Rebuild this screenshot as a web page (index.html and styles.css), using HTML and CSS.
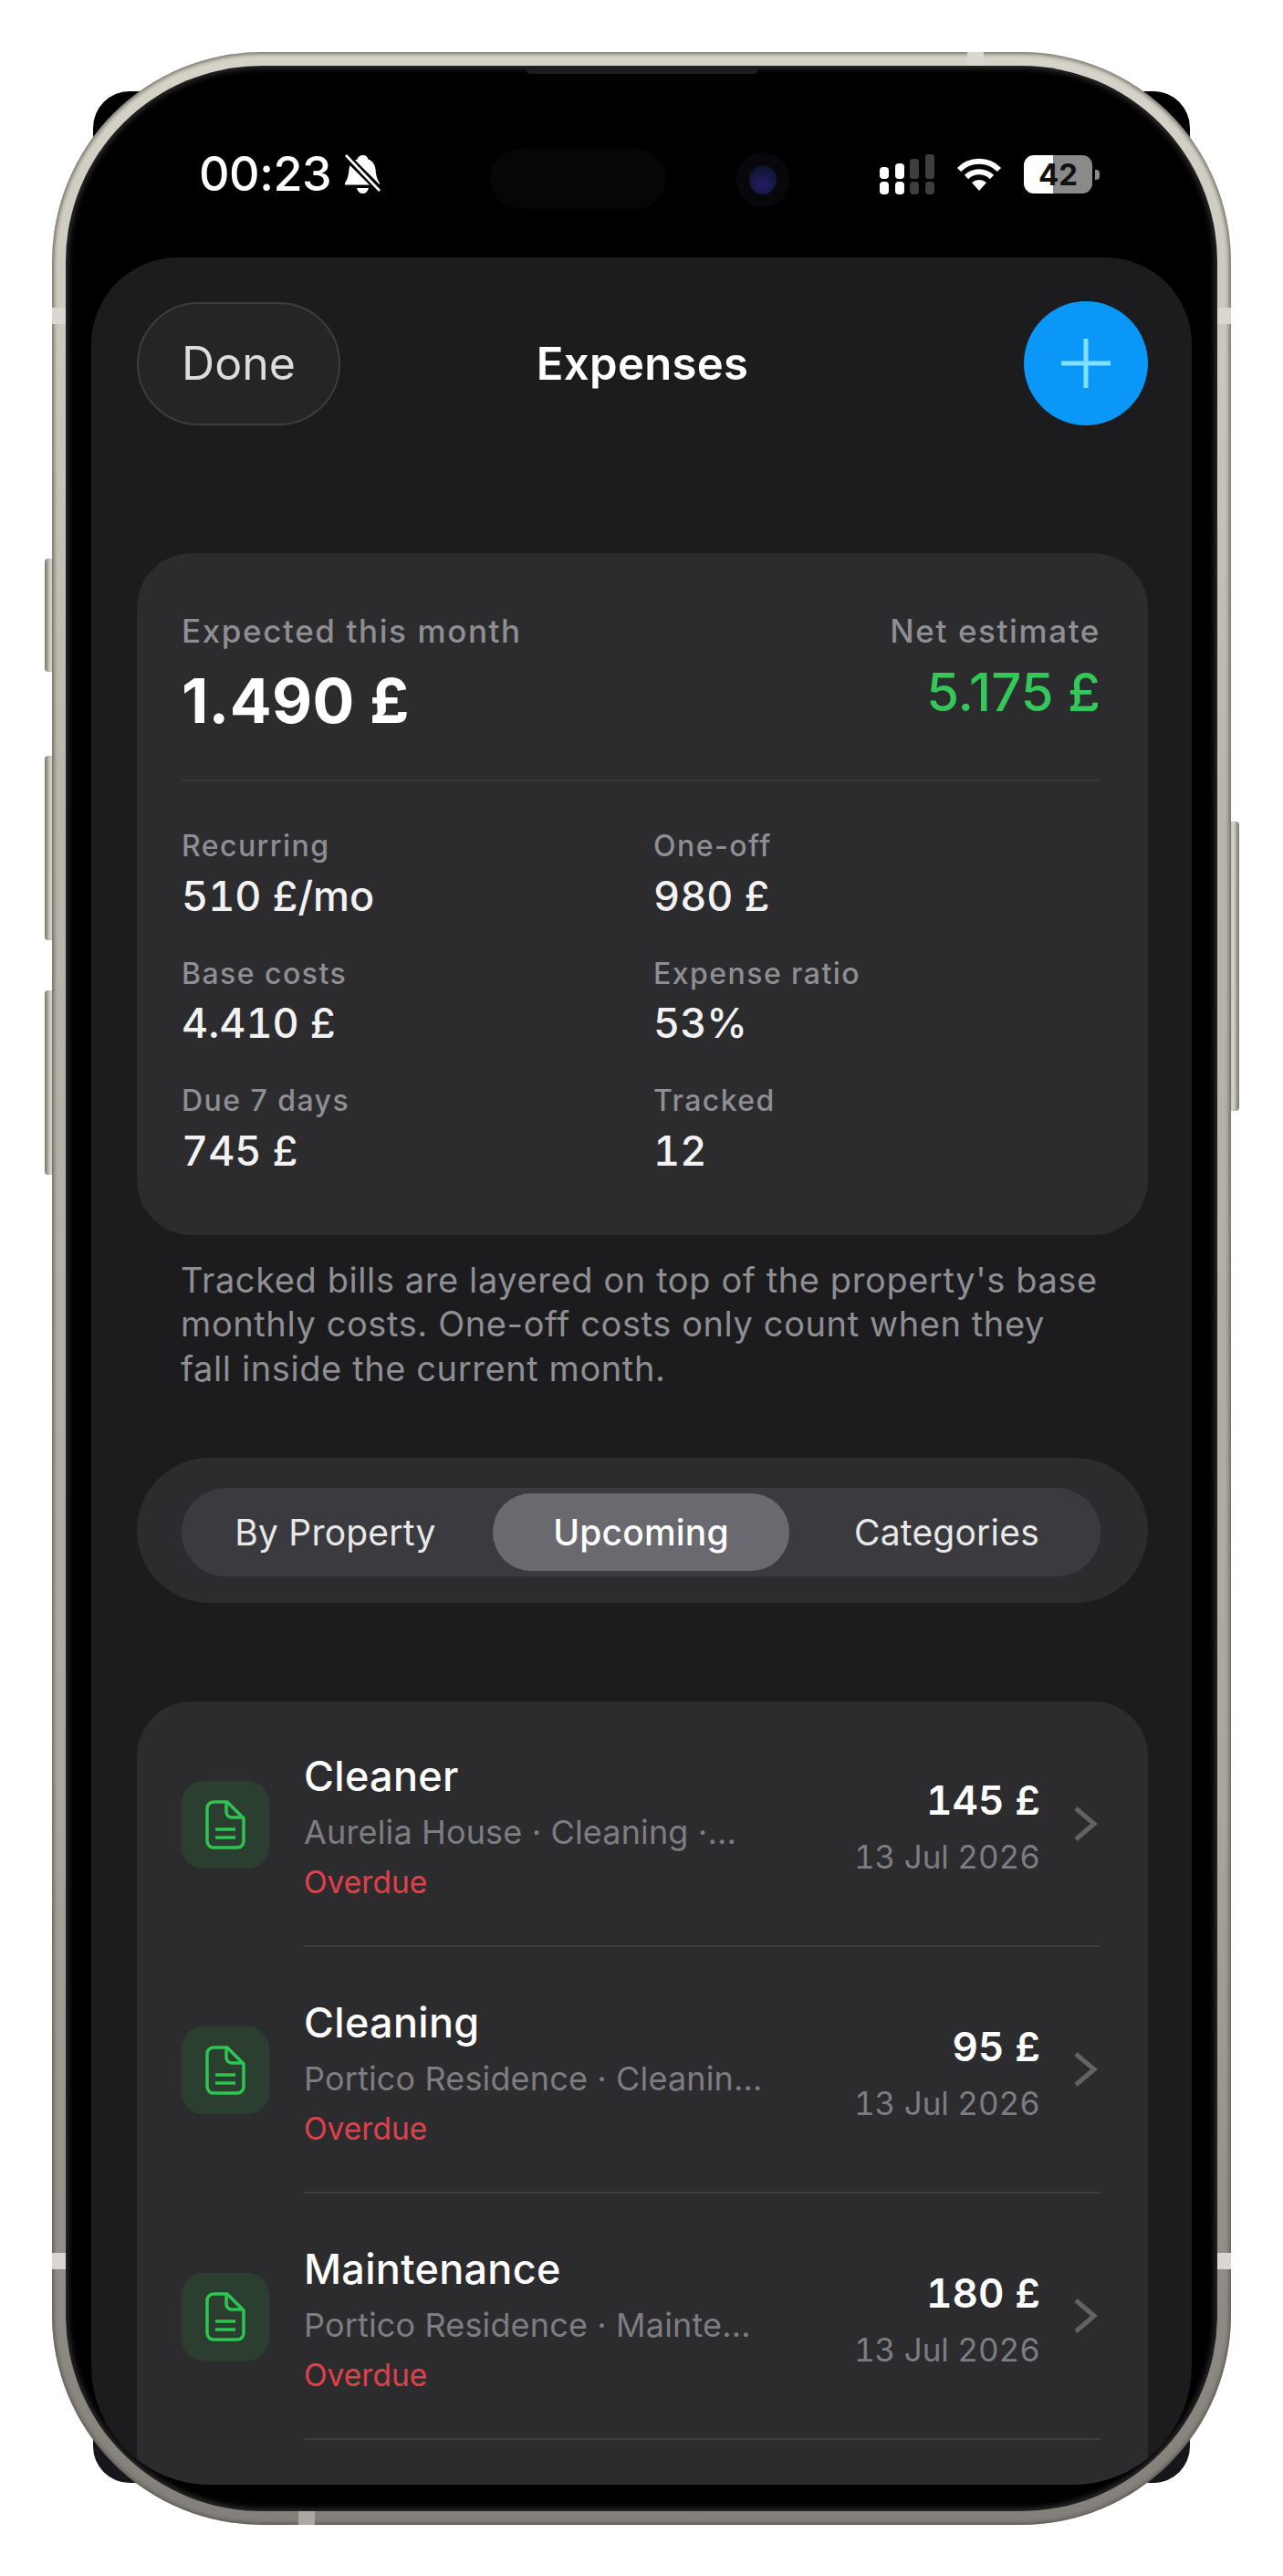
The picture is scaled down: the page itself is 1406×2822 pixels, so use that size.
FILE: index.html
```html
<!DOCTYPE html>
<html lang="en">
<head>
    <meta charset="UTF-8">
    <meta name="viewport" content="width=device-width, initial-scale=1.0">
    <title>Expenses</title>
    <link rel="stylesheet" href="styles.css">
</head>
<body>
    <div class="phone">
        <div class="phone-back"></div>
        <div class="side-btn btn-action"></div>
        <div class="side-btn btn-up"></div>
        <div class="side-btn btn-down"></div>
        <div class="side-btn btn-power"></div>

        <div class="frame">
            <div class="band band-left-top"></div>
            <div class="band band-right-top"></div>
            <div class="band band-left-bottom"></div>
            <div class="band band-right-bottom"></div>
            <div class="band band-top"></div>
            <div class="band band-bottom"></div>

            <div class="bezel">
                <div class="speaker"></div>

                <div class="status-bar">
                    <div class="status-left">
                        <span class="clock">00:23</span>
                        <svg class="bell" viewBox="0 0 40 44">
                            <path d="M21 1c3 0 5 2 5.500 4.500 5 2 7.500 6 8 11 .5 6 1.500 11 4.500 15v2H1v-2c3-4 4-9 4.500-15 .5-5 4-9 9-11C15 3 18 1 21 1z" fill="#fff"/>
                            <path d="M14 37h13c-1 4-3.500 6-6.500 6S15 41 14 37z" fill="#fff"/>
                            <path d="M0 0l40 40" stroke="#000" stroke-width="8"/>
                            <path d="M2 1l37 39" stroke="#fff" stroke-width="2.600"/>
                        </svg>
                    </div>
                    <div class="island"></div>
                    <div class="camera"><div class="lens"></div></div>
                    <div class="status-right">
                        <svg class="signal" viewBox="0 0 60 44">
                            <rect x="0" y="14" width="10" height="13" rx="4" fill="#fff"/>
                            <rect x="0" y="30" width="10" height="14" rx="4" fill="#fff"/>
                            <rect x="17" y="10" width="10" height="17" rx="4" fill="#fff"/>
                            <rect x="17" y="30" width="10" height="14" rx="4" fill="#fff"/>
                            <rect x="33" y="5" width="10" height="22" rx="3" fill="#3d3d3d"/>
                            <rect x="33" y="30" width="10" height="14" rx="4" fill="#3d3d3d"/>
                            <rect x="50" y="0" width="10" height="27" rx="3" fill="#3d3d3d"/>
                            <rect x="50" y="30" width="10" height="14" rx="4" fill="#3d3d3d"/>
                        </svg>
                        <svg class="wifi" viewBox="0 0 50 36">
                            <path d="M3 13A31 31 0 0 1 47 13" fill="none" stroke="#fff" stroke-width="6"/>
                            <path d="M11 21A20 20 0 0 1 39 21" fill="none" stroke="#fff" stroke-width="6"/>
                            <path d="M25 36L17 27A12 12 0 0 1 33 27Z" fill="#fff"/>
                        </svg>
                        <div class="battery">42</div>
                        <div class="battery-nub"></div>
                    </div>
                </div>

                <div class="screen">
                    <header class="nav">
                        <div class="nav-left"><button class="btn-done">Done</button></div>
                        <h1 class="nav-title">Expenses</h1>
                        <div class="nav-right">
                            <button class="btn-add">
                                <svg viewBox="0 0 54 54" width="54" height="54">
                                    <path d="M27 0V54M0 27H54" stroke="#7fe0ff" stroke-width="5"/>
                                </svg>
                            </button>
                        </div>
                    </header>

                    <section class="summary">
                        <div class="summary-top">
                            <div>
                                <div class="summary-label">Expected this month</div>
                                <div class="summary-total">1.490 £</div>
                            </div>
                            <div class="summary-net">
                                <div class="summary-label">Net estimate</div>
                                <div class="summary-green">5.175 £</div>
                            </div>
                        </div>
                        <div class="stats">
                            <div><div class="stat-label">Recurring</div><div class="stat-value">510 £/mo</div></div>
                            <div><div class="stat-label">One-off</div><div class="stat-value">980 £</div></div>
                            <div><div class="stat-label">Base costs</div><div class="stat-value">4.410 £</div></div>
                            <div><div class="stat-label">Expense ratio</div><div class="stat-value">53%</div></div>
                            <div><div class="stat-label">Due 7 days</div><div class="stat-value">745 £</div></div>
                            <div><div class="stat-label">Tracked</div><div class="stat-value">12</div></div>
                        </div>
                    </section>

                    <p class="note">Tracked bills are layered on top of the property's base<br>monthly costs. One-off costs only count when they<br>fall inside the current month.</p>

                    <div class="segment-wrap">
                        <div class="segment">
                            <div class="segment-item">By Property</div>
                            <div class="segment-item active">Upcoming</div>
                            <div class="segment-item">Categories</div>
                        </div>
                    </div>

                    <section class="list">
                        <div class="row">
                            <div class="row-icon">
                                <svg viewBox="0 0 44 54" width="44" height="54"><path d="M9 2H24L42 20V45A7 7 0 0 1 35 52H9A7 7 0 0 1 2 45V9A7 7 0 0 1 9 2ZM23 2V13A6 6 0 0 0 29 19H42M11 32H33M11 41H33" fill="none" stroke="#2fc552" stroke-width="3.500"/></svg>
                            </div>
                            <div class="row-body">
                                <div class="row-text">
                                    <div class="row-title">Cleaner</div>
                                    <div class="row-sub">Aurelia House · Cleaning ·...</div>
                                    <div class="row-status">Overdue</div>
                                </div>
                                <div class="row-right">
                                    <div class="row-amount">145 £</div>
                                    <div class="row-date">13 Jul 2026</div>
                                </div>
                                <svg class="chevron" viewBox="0 0 28 40"><path d="M4 3L24 20L4 37" fill="none" stroke="#636366" stroke-width="5"/></svg>
                            </div>
                        </div>
                        <div class="row">
                            <div class="row-icon">
                                <svg viewBox="0 0 44 54" width="44" height="54"><path d="M9 2H24L42 20V45A7 7 0 0 1 35 52H9A7 7 0 0 1 2 45V9A7 7 0 0 1 9 2ZM23 2V13A6 6 0 0 0 29 19H42M11 32H33M11 41H33" fill="none" stroke="#2fc552" stroke-width="3.500"/></svg>
                            </div>
                            <div class="row-body">
                                <div class="row-text">
                                    <div class="row-title">Cleaning</div>
                                    <div class="row-sub">Portico Residence · Cleanin...</div>
                                    <div class="row-status">Overdue</div>
                                </div>
                                <div class="row-right">
                                    <div class="row-amount">95 £</div>
                                    <div class="row-date">13 Jul 2026</div>
                                </div>
                                <svg class="chevron" viewBox="0 0 28 40"><path d="M4 3L24 20L4 37" fill="none" stroke="#636366" stroke-width="5"/></svg>
                            </div>
                        </div>
                        <div class="row">
                            <div class="row-icon">
                                <svg viewBox="0 0 44 54" width="44" height="54"><path d="M9 2H24L42 20V45A7 7 0 0 1 35 52H9A7 7 0 0 1 2 45V9A7 7 0 0 1 9 2ZM23 2V13A6 6 0 0 0 29 19H42M11 32H33M11 41H33" fill="none" stroke="#2fc552" stroke-width="3.500"/></svg>
                            </div>
                            <div class="row-body">
                                <div class="row-text">
                                    <div class="row-title">Maintenance</div>
                                    <div class="row-sub">Portico Residence · Mainte...</div>
                                    <div class="row-status">Overdue</div>
                                </div>
                                <div class="row-right">
                                    <div class="row-amount">180 £</div>
                                    <div class="row-date">13 Jul 2026</div>
                                </div>
                                <svg class="chevron" viewBox="0 0 28 40"><path d="M4 3L24 20L4 37" fill="none" stroke="#636366" stroke-width="5"/></svg>
                            </div>
                        </div>
                    </section>
                </div>
            </div>
        </div>
    </div>
</body>
</html>
```
FILE: styles.css
```css
* {
    box-sizing: border-box;
}

body {
    margin: 0;
    background-color: #fff;
    font-family: Inter, "Liberation Sans", sans-serif;
    color: #fff;
}

.phone {
    position: relative;
    width: 1292px;
    height: 2709px;
    margin: 57px 0 0 57px;
}

.phone-back {
    position: absolute;
    left: 45px;
    right: 45px;
    top: 43px;
    bottom: 46px;
    border-radius: 40px;
    background: linear-gradient(180deg, #000 0%, #000 60%, #16161c 100%);
}

/* side buttons stick out of the frame */
.side-btn {
    position: absolute;
    width: 14px;
    border-radius: 4px 0 0 4px;
    background: linear-gradient(90deg, #77746c, #d6d3c9 45%, #a5a299);
}

.btn-action { left: -8px; top: 555px; height: 124px; }
.btn-up { left: -8px; top: 771px; height: 202px; }
.btn-down { left: -8px; top: 1028px; height: 202px; }
.btn-power {
    right: -9px;
    top: 843px;
    height: 317px;
    border-radius: 0 4px 4px 0;
    background: linear-gradient(270deg, #77746c, #d6d3c9 45%, #a5a299);
}

.frame {
    position: relative;
    height: 100%;
    padding: 16px;
    border-radius: 230px;
    background: linear-gradient(180deg, #d6d3c8 0%, #b9b6ac 30%, #aaa79e 70%, #83807a 100%);
    box-shadow: inset 0 0 4px 2px rgba(80, 78, 70, 0.75);
}

.band {
    position: absolute;
    background-color: #d9d7d0;
}

.band-left-top { left: 0; top: 280px; width: 16px; height: 18px; }
.band-right-top { right: 0; top: 280px; width: 16px; height: 18px; }
.band-left-bottom { left: 0; top: 2411px; width: 16px; height: 18px; }
.band-right-bottom { right: 0; top: 2411px; width: 16px; height: 18px; }
.band-top { left: 1003px; top: 0; width: 18px; height: 16px; }
.band-bottom { left: 270px; bottom: 0; width: 18px; height: 16px; background-color: #aaa89f; }

.bezel {
    position: relative;
    display: flex;
    flex-direction: column;
    height: 100%;
    padding: 0 27px 28px;
    border-radius: 214px;
    background-color: #000;
    box-shadow: 0 0 0 1px #222, inset 0 0 7px 1px #3a3a3a;
    overflow: hidden;
}

.speaker {
    position: absolute;
    left: 503px;
    top: 0;
    width: 255px;
    height: 8px;
    border-radius: 0 0 6px 6px;
    background-color: #1d1d1f;
}

.status-bar {
    position: relative;
    flex: 0 0 209px;
    display: flex;
    justify-content: space-between;
    padding: 96px 101px 0 118px;
}

.status-left {
    display: flex;
    align-items: center;
    height: 44px;
    gap: 14px;
}

.clock {
    font-size: 52px;
    font-weight: 500;
    line-height: 44px;
    letter-spacing: -0.5px;
}

.bell {
    width: 40px;
    height: 44px;
}

.island {
    position: absolute;
    left: 437px;
    top: 90px;
    width: 193px;
    height: 66px;
    border-radius: 33px;
    background-color: #060606;
}

.camera {
    position: absolute;
    left: 707px;
    top: 94px;
    width: 58px;
    height: 60px;
    border-radius: 50%;
    background-color: #08070b;
}

.lens {
    width: 30px;
    height: 32px;
    margin: 14px;
    border-radius: 50%;
    background: radial-gradient(circle at 50% 65%, #2a1a66 0%, #101a3c 55%, #0b0f22 100%);
}

.status-right {
    display: flex;
    align-items: center;
    height: 44px;
}

.signal {
    width: 60px;
    height: 44px;
}

.wifi {
    width: 50px;
    height: 36px;
    margin-left: 24px;
}

.battery {
    width: 75px;
    height: 42px;
    margin-left: 24px;
    border-radius: 11px;
    background: linear-gradient(90deg, #fff 43%, #8a8a8a 43%);
    color: #111;
    font-size: 33px;
    font-weight: 700;
    line-height: 42px;
    text-align: center;
}

.battery-nub {
    width: 5px;
    height: 11px;
    margin-left: 3px;
    border-radius: 0 4px 4px 0;
    background-color: #8a8a8a;
}

.screen {
    flex: 1;
    display: flex;
    flex-direction: column;
    min-height: 0;
    padding: 0 48px 0 50px;
    border-radius: 95px 95px 130px 130px;
    background-color: #1c1c1e;
    overflow: hidden;
}

.nav {
    display: grid;
    grid-template-columns: 1fr auto 1fr;
    align-items: center;
    height: 136px;
    margin-top: 48px;
    flex: none;
}

.nav-right {
    display: flex;
    justify-content: flex-end;
}

.btn-done {
    width: 223px;
    height: 135px;
    padding: 0;
    border: 2px solid #3d3d3f;
    border-radius: 68px;
    background-color: #252527;
    color: #dcdcdc;
    font-family: inherit;
    font-size: 50px;
}

.nav-title {
    margin: 0;
    font-size: 49px;
    font-weight: 600;
    letter-spacing: 0.3px;
}

.btn-add {
    display: flex;
    align-items: center;
    justify-content: center;
    width: 136px;
    height: 136px;
    padding: 0;
    border: none;
    border-radius: 50%;
    background-color: #0a97f7;
}

.summary {
    flex: none;
    margin-top: 140px;
    padding: 63px 52px 64px 49px;
    border-radius: 60px;
    background-color: #2c2c2e;
}

.summary-top {
    display: flex;
    justify-content: space-between;
    height: 187px;
    border-bottom: 2px solid #363638;
}

.summary-net {
    text-align: right;
}

.summary-label {
    color: #8e8e93;
    font-size: 35px;
    font-weight: 500;
    line-height: 44px;
    letter-spacing: 1.6px;
}

.summary-total {
    margin-top: 14px;
    font-size: 68px;
    font-weight: 700;
    line-height: 80px;
    letter-spacing: 0.3px;
}

.summary-green {
    margin-top: 10px;
    color: #34c759;
    font-size: 58px;
    font-weight: 500;
    line-height: 70px;
}

.stats {
    display: grid;
    grid-template-columns: 517px 1fr;
    row-gap: 37px;
    padding-top: 51px;
}

.stat-label {
    color: #8e8e93;
    font-size: 32px;
    font-weight: 500;
    line-height: 40px;
    letter-spacing: 1.450px;
}

.stat-value {
    margin-top: 6.500px;
    font-size: 45px;
    font-weight: 500;
    line-height: 56px;
    font-variant-numeric: tabular-nums;
    color: #f2f2f2;
}

.note {
    flex: none;
    margin: 25px 0 0;
    padding-left: 48px;
    color: #8e8e93;
    font-size: 38px;
    line-height: 48.600px;
    letter-spacing: 0.6px;
}

.segment-wrap {
    flex: none;
    margin-top: 74px;
    padding: 33px 52px 29px 49px;
    border-radius: 80px;
    background-color: #2c2c2e;
}

.segment {
    display: flex;
    gap: 10px;
    padding: 6px;
    border-radius: 48px;
    background-color: #3a3a3f;
}

.segment-item {
    flex: 1;
    height: 85px;
    border-radius: 42px;
    color: #e8e8e8;
    font-size: 39px;
    font-weight: 400;
    line-height: 85px;
    letter-spacing: 0.2px;
    text-align: center;
}

.segment-item.active {
    background-color: #69696f;
    color: #fff;
    font-weight: 500;
}

.list {
    flex: 1;
    margin-top: 108px;
    border-radius: 60px 60px 0 0;
    background-color: #2c2c2e;
}

.row {
    display: flex;
    align-items: center;
    padding: 0 52px 0 49px;
}

.row-icon {
    display: flex;
    flex: none;
    align-items: center;
    justify-content: center;
    width: 96px;
    height: 96px;
    border-radius: 24px;
    background-color: #2b3e30;
}

.row-body {
    flex: 1;
    display: flex;
    align-items: center;
    height: 270px;
    margin-left: 38px;
    border-bottom: 2px solid #3f3f41;
}

.row:first-child .row-body {
    height: 269px;
}

.row-text {
    flex: 1;
    min-width: 0;
    padding-top: 7px;
}

.row-title {
    font-size: 45px;
    font-weight: 500;
    line-height: 52px;
    letter-spacing: 0.3px;
}

.row-sub {
    margin-top: 13px;
    color: #7d7d82;
    font-size: 36px;
    line-height: 44px;
    letter-spacing: 0.15px;
    white-space: nowrap;
}

.row-status {
    margin-top: 13px;
    color: #e0404a;
    font-size: 33.500px;
    line-height: 40px;
}

.row-right {
    padding-top: 7px;
    text-align: right;
}

.row-amount {
    font-size: 44px;
    font-weight: 600;
    line-height: 52px;
    font-variant-numeric: tabular-nums;
}

.row-date {
    margin-top: 14px;
    color: #7d7d82;
    font-size: 35px;
    line-height: 44px;
    font-variant-numeric: tabular-nums;
}

.chevron {
    flex: none;
    width: 28px;
    height: 40px;
    margin: 0 3px 0 35px;
}
```
